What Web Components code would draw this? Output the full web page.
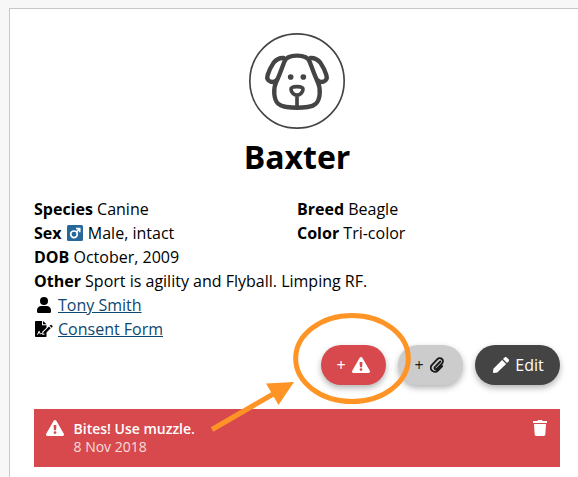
<!DOCTYPE html>
<html lang="en">
<head>
<meta charset="utf-8">
<title>Baxter</title>
<style>
  html {
    height: 100%;
    overflow: hidden;
    background: #f7f7f7;
  }

  body {
    margin: 0;
    padding: 8px 0 0 9px;
    height: 100%;
    box-sizing: border-box;
    overflow: hidden;
    font: 16px/24px "Open Sans", "Noto Sans", sans-serif;
    color: #000;
  }
</style>
</head>
<body>
<patient-card name="Baxter">
  <patient-field label="Species">Canine</patient-field>
  <patient-field label="Breed">Beagle</patient-field>
  <patient-field label="Sex"><ui-icon name="male"></ui-icon> Male, intact</patient-field>
  <patient-field label="Color">Tri-color</patient-field>
  <patient-field label="DOB" wide>October, 2009</patient-field>
  <patient-field label="Other" wide>Sport is agility and Flyball. Limping RF.</patient-field>
  <icon-link icon="user">Tony Smith</icon-link>
  <icon-link icon="form">Consent Form</icon-link>
  <pill-button slot="actions" kind="danger" plus icon="warning"></pill-button>
  <pill-button slot="actions" kind="light" plus icon="clip"></pill-button>
  <pill-button slot="actions" kind="dark" icon="pencil">Edit</pill-button>
  <alert-note slot="alerts" date="8 Nov 2018">Bites! Use muzzle.</alert-note>
  <callout-arrow slot="callout"></callout-arrow>
</patient-card>

<script>
const icons = {
  male: {
    box: '0 0 16 16',
    size: [16, 16],
    body: `<rect width="16" height="16" rx="1.5" fill="#26689a"/>
      <g fill="none" stroke="#fff" stroke-width="1.700"><circle cx="7" cy="9.300" r="3.300"/><path d="M9.300 7 12.600 3.700M9 3.500h3.700v3.700"/></g>`
  },
  user: {
    box: '0 0 14 16',
    size: [14, 16],
    body: '<circle cx="7" cy="4" r="4"/><path d="M4.2 9h5.6A4.2 4.2 0 0 1 14 13.2v1.3a1.5 1.5 0 0 1-1.5 1.5h-11A1.5 1.5 0 0 1 0 14.5v-1.3A4.2 4.2 0 0 1 4.2 9z"/>'
  },
  form: {
    box: '0 0 18 16',
    size: [18, 16],
    body: `<path d="M.8 0H7v4.2h4.5v2.5L7.2 10.8v2h2.3l2-1.9v4.3a.8.8 0 0 1-.8.8H.8a.8.8 0 0 1-.8-.8V.8A.8.8 0 0 1 .8 0zM8 0l3.500 3.300H8z"/>
      <path d="M8.300 11.200 14 5.500l1.700 1.700L10 12.900H8.300zM14.700 4.800l.8-.8a.7.7 0 0 1 1 0l.9.9a.7.7 0 0 1 0 1l-.8.8z"/>
      <path d="M2 13.200h.8l1.300-3 1.300 3 1-1 .8 1h2.300" fill="none" stroke="#fff"/>`
  },
  warning: {
    box: '0 0 18 16',
    size: [18, 16],
    body: '<path fill-rule="evenodd" d="M10.300.8l7.500 13a1.450 1.450 0 0 1-1.300 2.200h-15A1.450 1.450 0 0 1 .2 13.800l7.500-13a1.500 1.500 0 0 1 2.600 0zM7.600 5.300l.3 4.600q0 .4.4.4h1.400q.4 0 .4-.4l.3-4.600q0-.4-.4-.4H8q-.4 0-.4.4zM9 11.200a1.400 1.400 0 1 0 0 2.800 1.400 1.400 0 0 0 0-2.800z"/>'
  },
  clip: {
    box: '0 0 14 16',
    size: [14, 16],
    body: '<path d="M10.300 4.500 4.900 10.200a1.300 1.300 0 0 0 1.900 1.800l5.200-5.400a3.200 3.200 0 0 0-4.600-4.500L2 7.800a4.100 4.100 0 0 0 5.900 5.800l4.300-4.500" fill="none" stroke="currentColor" stroke-width="1.900" stroke-linecap="round"/>'
  },
  pencil: {
    box: '0 0 16 16',
    size: [16, 16],
    body: '<path d="M9.100 2.900l4 4L4.300 15.600.7 16a.7.7 0 0 1-.7-.8l.4-3.500zM10 2l1.600-1.600a1.500 1.500 0 0 1 2.100 0l1.900 1.900a1.500 1.500 0 0 1 0 2.100L14 6z"/>'
  },
  trash: {
    box: '0 0 14 16',
    size: [14, 16],
    body: '<path d="M4.500 1 5 0h4l.5 1h4q.5 0 .5.500V3H0V1.500Q0 1 .500 1zM1 4h12l-.7 10.600A1.500 1.500 0 0 1 10.800 16H3.200a1.500 1.500 0 0 1-1.500-1.400z"/>'
  },
  dog: {
    box: '0 0 288 288',
    size: [96, 96],
    body: `<g fill="none" stroke="currentColor" stroke-width="13" stroke-linecap="round" stroke-linejoin="round">
        <circle cx="144" cy="144" r="141.500" stroke-width="5"/>
        <path d="M144 68c-20 0-33 5-38 18-9 24-15 42-25 63-5 10-6 22-5 34 2 27 14 36 36 39 22 3 42 3 64 0 22-3 34-12 36-39 1-12 0-24-5-34-10-21-16-39-25-63-5-13-18-18-38-18z"/>
        <path d="M104 75c-14-1-22 4-30 14-8 12-14 24-18 37-3 10 0 17 9 20 6 2 13 0 17-4"/>
        <path d="M184 75c14-1 22 4 30 14 8 12 14 24 18 37 3 10 0 17-9 20-6 2-13 0-17-4"/>
        <path d="M144 161c-10 0-18 2-18 8 0 9 9 17 18 17s18-8 18-17c0-6-8-8-18-8zM144 188v34" stroke-width="11"/>
      </g>
      <circle cx="125" cy="132" r="8.500"/><circle cx="163" cy="132" r="8.500"/>`
  }
};

const render = (element, html) => {
  element.attachShadow({ mode: 'open' }).innerHTML = html;
};

class UiIcon extends HTMLElement {
  connectedCallback () {
    if (this.shadowRoot) return;
    const icon = icons[this.getAttribute('name')];
    const [width, height] = icon.size;
    render(this, `
      <style>
        :host {
          display: inline-block;
          line-height: 0;
          vertical-align: -2px;
        }

        svg {
          display: block;
          fill: currentColor;
        }
      </style>
      <svg viewBox="${icon.box}" width="${width}" height="${height}" aria-hidden="true">${icon.body}</svg>
    `);
  }
}

class PatientField extends HTMLElement {
  connectedCallback () {
    if (this.shadowRoot) return;
    render(this, `
      <style>
        :host {
          display: block;
        }

        :host([wide]) {
          grid-column: 1 / -1;
        }

        ::slotted(ui-icon) {
          margin: 0 1px;
        }
      </style>
      <b>${this.getAttribute('label')}</b> <slot></slot>
    `);
  }
}

class IconLink extends HTMLElement {
  connectedCallback () {
    if (this.shadowRoot) return;
    render(this, `
      <style>
        :host {
          display: flex;
          grid-column: 1 / -1;
          align-items: center;
          gap: 4px;
        }

        .icon {
          display: flex;
          justify-content: center;
          width: 20px;
        }

        a {
          color: #0e4771;
          text-decoration: underline;
        }
      </style>
      <span class="icon"><ui-icon name="${this.getAttribute('icon')}"></ui-icon></span>
      <a href="#"><slot></slot></a>
    `);
  }
}

class PillButton extends HTMLElement {
  connectedCallback () {
    if (this.shadowRoot) return;
    const plus = this.hasAttribute('plus') ? '<span>+</span>' : '';
    render(this, `
      <style>
        :host {
          display: block;
          color: #fff;
          --pill: #444;
          --pill-width: 85px;
          --pill-pad: 0 0 0 2px;
        }

        :host([kind=danger]) {
          --pill: #d7494c;
          --pill-width: 65px;
          --pill-pad: 0 1px 0 0;
        }

        :host([kind=light]) {
          --pill: #ccc;
          --pill-width: 65px;
          --pill-pad: 0 3px 0 0;
          color: #1a1a1a;
        }

        button {
          display: flex;
          align-items: center;
          justify-content: center;
          gap: 6px;
          box-sizing: border-box;
          width: var(--pill-width);
          height: 40px;
          margin: 0;
          padding: var(--pill-pad);
          border: 0;
          border-radius: 20px;
          background: var(--pill);
          box-shadow: 0 3px 6px rgba(0, 0, 0, 0.3);
          color: inherit;
          font: inherit;
        }
      </style>
      <button type="button">${plus}<ui-icon name="${this.getAttribute('icon')}"></ui-icon><slot></slot></button>
    `);
  }
}

class AlertNote extends HTMLElement {
  connectedCallback () {
    if (this.shadowRoot) return;
    render(this, `
      <style>
        :host {
          display: flex;
          align-items: flex-start;
          box-sizing: border-box;
          height: 58px;
          padding: 11px 13px 0 11.5px;
          background: #d7494c;
          color: #fff;
          font-size: 14px;
          line-height: 18px;
        }

        .text {
          flex: 1;
          margin-left: 10px;
        }

        .message {
          font-weight: 600;
        }

        .date {
          opacity: 0.8;
        }
      </style>
      <ui-icon name="warning"></ui-icon>
      <div class="text">
        <div class="message"><slot></slot></div>
        <div class="date">${this.getAttribute('date')}</div>
      </div>
      <ui-icon name="trash"></ui-icon>
    `);
  }
}

/* Ring and arrow drawn over the alert button */
class CalloutArrow extends HTMLElement {
  connectedCallback () {
    if (this.shadowRoot) return;
    render(this, `
      <style>
        :host {
          position: absolute;
          left: 200px;
          top: 304px;
          pointer-events: none;
        }

        svg {
          display: block;
        }
      </style>
      <svg width="204" height="122" viewBox="210 313 204 122" fill="none" stroke="#ff9426" stroke-width="5">
        <ellipse cx="352" cy="358.500" rx="56.300" ry="43"/>
        <path d="M212 429.500 275 393"/>
        <path d="M294 382 266 383.500 278.500 405z" fill="#ff9426" stroke="none"/>
      </svg>
    `);
  }
}

class PatientCard extends HTMLElement {
  connectedCallback () {
    if (this.shadowRoot) return;
    render(this, `
      <style>
        :host {
          display: block;
          position: relative;
          width: 526px;
          min-height: 444px;
          padding: 24px 24px 0;
          border: 1px solid #c8c8c8;
          border-bottom: 0;
          background: #fff;
        }

        header {
          display: flex;
          flex-direction: column;
          align-items: center;
          color: #444;
        }

        h1 {
          margin: 8px 0 20px;
          font-size: 32px;
          line-height: 40px;
          color: #000;
        }

        .fields {
          display: grid;
          grid-template-columns: 1fr 1fr;
          grid-auto-rows: 24px;
        }

        .actions {
          display: flex;
          justify-content: flex-end;
          gap: 12px;
          margin: 4px 0 24px;
        }
      </style>
      <header>
        <ui-icon name="dog"></ui-icon>
        <h1>${this.getAttribute('name')}</h1>
      </header>
      <div class="fields"><slot></slot></div>
      <div class="actions"><slot name="actions"></slot></div>
      <slot name="alerts"></slot>
      <slot name="callout"></slot>
    `);
  }
}

customElements.define('ui-icon', UiIcon);
customElements.define('patient-field', PatientField);
customElements.define('icon-link', IconLink);
customElements.define('pill-button', PillButton);
customElements.define('alert-note', AlertNote);
customElements.define('callout-arrow', CalloutArrow);
customElements.define('patient-card', PatientCard);
</script>
</body>
</html>
